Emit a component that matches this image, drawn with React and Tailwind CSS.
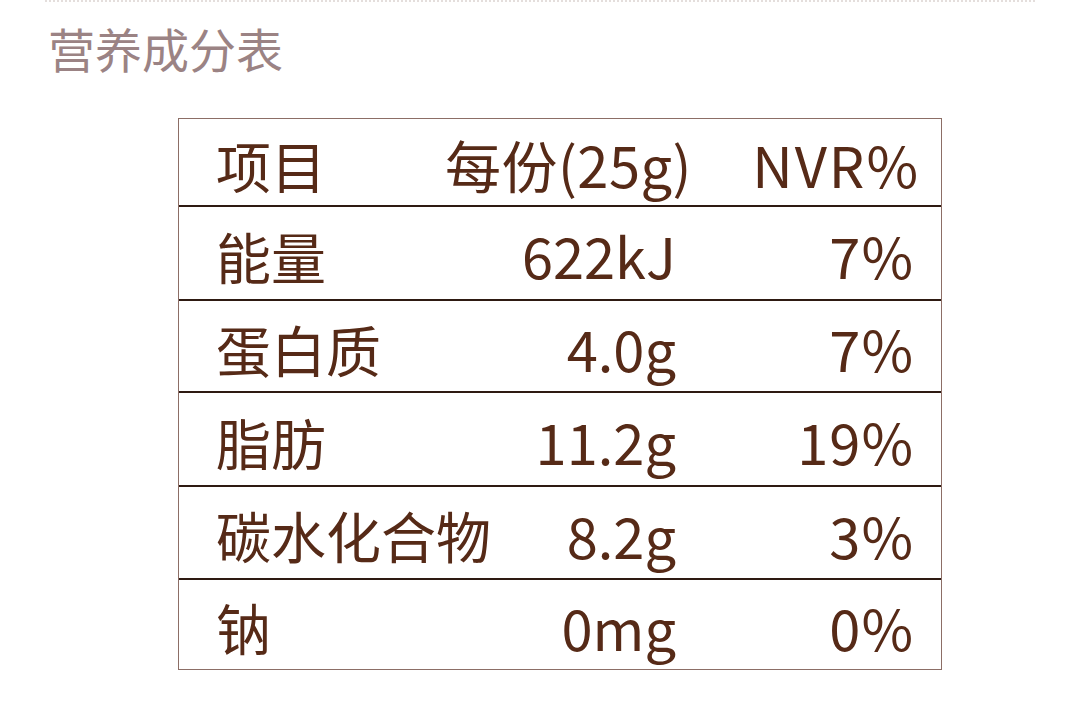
import React from 'react';

const rows = [
  { name: '能量', amount: '622kJ', nvr: '7%', h: 'h-[94px]' },
  { name: '蛋白质', amount: '4.0g', nvr: '7%', h: 'h-[92px]' },
  { name: '脂肪', amount: '11.2g', nvr: '19%', h: 'h-[94px]' },
  { name: '碳水化合物', amount: '8.2g', nvr: '3%', h: 'h-[93px]' },
  { name: '钠', amount: '0mg', nvr: '0%', h: 'h-[89px]', last: true },
];

const font = { fontFamily: '"Noto Sans CJK SC", "Noto Sans", sans-serif' };

const App = () => {
  return (
    <div className="w-[1080px] h-[722px] bg-white overflow-hidden" style={font}>
      <div className="mx-[45px] border-t-2 border-dotted border-[#e4dedc]" />
      <div className="pl-[48px] pt-[12px] text-[47px] leading-[68px] text-[#9b8384]">
        营养成分表
      </div>

      <div className="ml-[178px] mt-[36px] w-[764px] border-[1.5px] border-[#8c6e66] text-[#562a17] text-[56px]">
        {/* header */}
        <div className="h-[88px] flex items-center pl-[37px] pt-[4px] border-b-2 border-[#2e1a12] whitespace-nowrap">
          <div className="w-[227px] text-[55px]">项目</div>
          <div className="w-[249px] text-right tracking-[0.5px]">每份(25g)</div>
          <div className="w-[228px] text-right tracking-[2px]">NVR%</div>
        </div>

        {rows.map((r) => (
          <div
            key={r.name}
            className={`${r.h} flex items-center pl-[37px] pt-[4px] whitespace-nowrap ${r.last ? '' : 'border-b-2 border-[#2e1a12]'}`}
          >
            <div className="w-[227px] text-[55px]">{r.name}</div>
            <div className="w-[233px] text-right">{r.amount}</div>
            <div className="w-[238px] text-right tracking-[1px]">{r.nvr}</div>
          </div>
        ))}
      </div>
    </div>
  );
};

export default App;
